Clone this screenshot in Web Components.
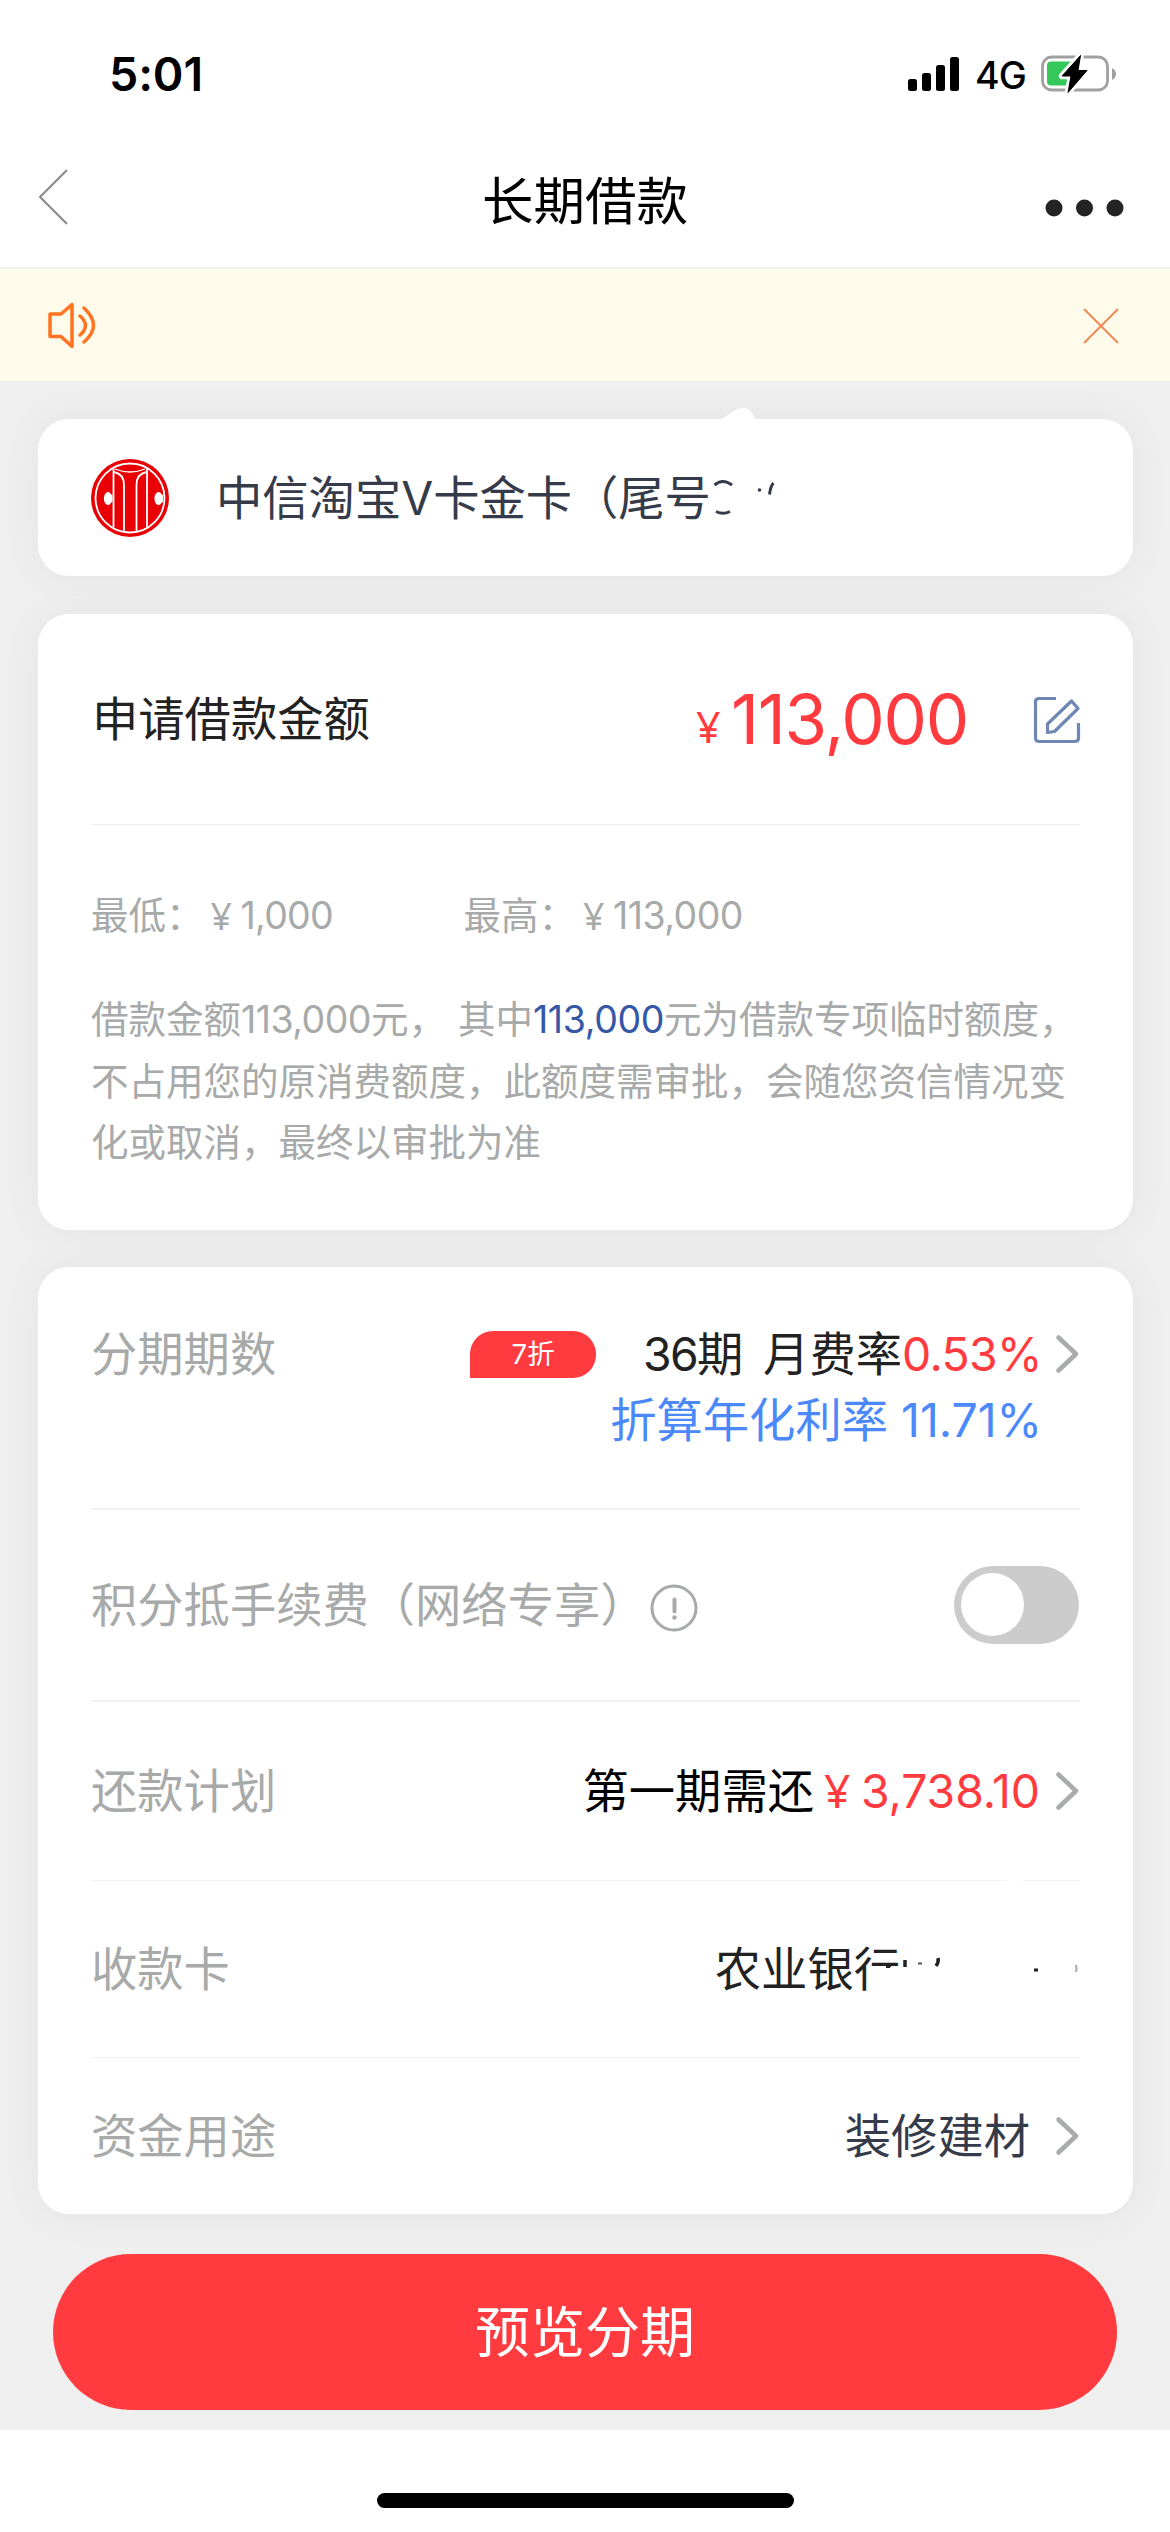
<!DOCTYPE html>
<html lang="zh-CN">
<head>
<meta charset="utf-8">
<title>长期借款</title>
<style>
html,body{margin:0;padding:0;background:#fff}
body{width:1170px;height:2532px;overflow:hidden;font-family:Inter,"Noto Sans CJK SC",sans-serif;font-size:46.3px;line-height:66px;color:#222;-webkit-font-smoothing:antialiased}
</style>
</head>
<body>
<loan-page></loan-page>
<script>
const define=(name,html,init)=>{
  const t=document.createElement('template');t.innerHTML=html;
  customElements.define(name,class extends HTMLElement{
    constructor(){super();this.attachShadow({mode:'open'}).append(t.content.cloneNode(true));}
    connectedCallback(){if(init)init(this);}
  });
};

/* text run whose tracking is adjusted so that it takes the given width */
define('fit-text',`<style>:host{display:inline-block;white-space:pre;flex:none}span{display:inline-block}</style><span><slot></slot></span>`,el=>{
  const s=el.shadowRoot.querySelector('span'),w=+el.getAttribute('w'),n=[...el.textContent].length;
  const natural=s.getBoundingClientRect().width;
  s.style.letterSpacing=((w-natural)/n)+'px';
  el.style.width=w+'px';
});

/* narrow currency sign in a box of fixed width */
define('yuan-sign',`<style>:host{display:block;flex:none;font-family:"Noto Sans","Noto Sans CJK SC",sans-serif}</style>¥`);

define('status-bar',`<style>
:host{display:flex;box-sizing:border-box;height:148px;padding:0 53px 0 109px;align-items:center;justify-content:space-between;color:#000}
.time{font-weight:600;font-size:46.5px}
.right{display:flex;align-items:center}
.net{font-weight:500;font-size:37.5px;margin:4px 0 0 15px}
svg{display:block}
.bat{margin-left:15px}
</style>
<fit-text class="time" w="94">5:01</fit-text>
<div class="right">
<svg width="52" height="34" viewBox="0 0 52 34"><rect x="0" y="22" width="9" height="12" rx="2.5"/><rect x="14" y="16" width="9" height="18" rx="2.5"/><rect x="28" y="8" width="9" height="26" rx="2.5"/><rect x="42" y="0" width="9" height="34" rx="2.5"/></svg>
<fit-text class="net" w="51">4G</fit-text>
<svg class="bat" width="76" height="38" viewBox="0 0 76 38"><rect x="1.5" y="2" width="65" height="33" rx="9" fill="none" stroke="#a0a0a0" stroke-width="2.8"/><path d="M71 13q4 2 4 6t-4 6z" fill="#a0a0a0"/><rect x="6" y="6.500" width="31" height="24" rx="4" fill="#34c759"/><path d="M39.500 .5 21 21h9L27 37.500 46 15.500h-9z" fill="#000" stroke="#fff" stroke-width="6.500" stroke-linejoin="round"/><path d="M39.500 .5 21 21h9L27 37.500 46 15.500h-9z" fill="#000" stroke="#000" stroke-width="1" stroke-linejoin="round"/></svg>
</div>`);

define('nav-bar',`<style>
:host{display:grid;box-sizing:border-box;height:121px;grid-template-columns:126px 1fr 126px;align-items:center;border-bottom:2px solid #f0f0f0;color:#000;font-size:51.5px}
.t{text-align:center;margin-top:-14px}
svg{display:block}
.back{margin:-21px 0 0 37px}
.more{margin:1px 45px 0 auto}
</style>
<svg class="back" width="34" height="60" viewBox="0 0 34 60"><path d="M30 3 3 30 30 57" fill="none" stroke="#888" stroke-width="2"/></svg>
<div class="t"><slot></slot></div>
<svg class="more" width="80" height="18" viewBox="0 0 80 18" fill="#242424"><circle cx="9" cy="9" r="8.500"/><circle cx="39.500" cy="9" r="8.500"/><circle cx="70" cy="9" r="8.500"/></svg>`);

define('notice-bar',`<style>
:host{display:flex;box-sizing:border-box;height:112px;background:#fefbeb;align-items:center;justify-content:space-between;padding:0 50px 0 46px}
svg{display:block}
</style>
<svg width="52" height="52" viewBox="0 0 52 52" fill="none" stroke="#ff7321" stroke-width="3.500" stroke-linejoin="round" stroke-linecap="round"><path d="M4 15h11L26 5.500v42L15 37.500H4z"/><path d="M34 17q11 9.500 0 19M38 9q19 17.500 0 34"/></svg>
<svg width="38" height="38" viewBox="0 0 38 38" fill="none" stroke="#f18a57" stroke-width="2"><path d="M2 3l34 34M36 3 2 37"/></svg>`);

define('panel-card',`<style>
:host{display:flex;flex-direction:column;box-sizing:border-box;margin:0 37px 0 38px;padding:0 53px;background:#fff;border-radius:31px;box-shadow:0 0 42px rgba(0,0,0,.055);position:relative}
</style><slot></slot>`);

define('bank-logo',`<style>:host{display:block;width:78px;height:78px}svg{display:block}</style>
<svg width="78" height="78" viewBox="0 0 78 78"><circle cx="39" cy="39" r="39" fill="#e80004"/><circle cx="39" cy="39" r="34.500" fill="none" stroke="#fff" stroke-width="1.800"/>
<g fill="none" stroke="#fff" stroke-width="1.800"><path d="M22.500 10v58M56 10v58"/><path d="M23 13q10 2 10 13v46M55.500 13q-10 2-10 13v46"/><path d="M24 10q15 6 30 0" stroke-width="1.300"/></g>
<path d="M21.500 36c-2 0-2-3-4-3-6 0-6 13 0 13 2 0 2-3 4-3zM72 36c-2 0-2-3-4-3-6 0-6 13 0 13 2 0 2-3 4-3z" fill="#fff"/></svg>`);

define('account-row',`<style>
:host{display:flex;height:157px;align-items:center;color:#363b4a;position:relative}
bank-logo{margin-right:47px}
.frag{position:absolute;left:592px;top:-12px}
</style>
<bank-logo></bank-logo><slot></slot>
<svg class="frag" width="100" height="120" viewBox="683 407 100 120"><path d="M721 419.500C730 415 734 408 744 408q8 1 11 11.500z" fill="#fff"/><g fill="none" stroke="#363b4a" stroke-width="3"><path d="M714.500 485q8-7 17.500 0M716 511.500q7 3.500 14 0"/><path d="M773.500 483q-3 3-4 11.500"/></g><circle cx="759.500" cy="490" r="1.800" fill="#363b4a"/></svg>`);

define('amount-row',`<style>
:host{display:flex;height:210px;align-items:center;border-bottom:1px solid #eee}
.label{flex:1;padding-left:1px}
.cur{width:35px;font-size:43px;color:#ff3b3f;margin-top:15px}
.num{font-size:69px;color:#ff3b3f;margin:0 64px 0 0}
svg{display:block;margin:2px -1px 0 1px}
</style>
<div class="label"><slot></slot></div>
<yuan-sign class="cur"></yuan-sign><fit-text class="num" w="237">113,000</fit-text>
<svg width="48" height="48" viewBox="0 0 48 48" fill="none" stroke="#6f87b3" stroke-width="3.200" stroke-linejoin="round"><path d="M23 2.500H6q-3.500 0-3.500 3.500v36q0 3.500 3.500 3.500h36q3.500 0 3.500-3.500V27"/><path d="M14.500 36.500v-8.500L38.500 5l6.500 7.500L21.500 35.500z"/></svg>`);

define('amount-limits',`<style>
:host{display:flex;margin-top:68px;height:46px;line-height:46px;font-size:37.5px;color:#a7aaa9;white-space:pre}
.hi{margin-left:130.500px}
div{display:flex}
yuan-sign{margin-left:7px;width:30px}
</style>
<div><span>最低：</span><yuan-sign></yuan-sign><fit-text w="92.5">1,000</fit-text></div>
<div class="hi"><span>最高：</span><yuan-sign></yuan-sign><fit-text w="130">113,000</fit-text></div>`);

define('amount-note',`<style>
:host{display:block;margin-top:50px;height:241px;font-size:37.5px;line-height:61.500px;color:#a7aaa9;white-space:nowrap}
.l{display:flex;height:61.500px}
.sp{width:12px}
</style>
<div class="l"><span>借款金额</span><fit-text w="130">113,000</fit-text><span>元，</span><span class="sp"></span><span>其中</span><fit-text w="131" style="color:#3557a5">113,000</fit-text><span>元为借款专项临时额度，</span></div>
<div class="l">不占用您的原消费额度，此额度需审批，会随您资信情况变</div>
<div class="l">化或取消，最终以审批为准</div>`);

define('form-row',`<style>
:host{display:flex;box-sizing:border-box;align-items:center;height:var(--h);border-bottom:var(--b,0) solid #f2f2f2;position:relative}
.label{flex:1;color:#a7aaa9;display:flex;align-items:center}
.value{display:flex;align-items:center;align-self:stretch}
</style>
<div class="label"><slot name="label"></slot></div><div class="value"><slot></slot></div>`);

define('chevron-icon',`<style>:host{display:block;margin:0 -1px 0 12px}svg{display:block}</style>
<svg width="27" height="42" viewBox="0 0 27 42"><path d="M4.500 4.500 22 21 4.500 37.500" fill="none" stroke="#a9acab" stroke-width="4.600" stroke-linecap="round" stroke-linejoin="round"/></svg>`);

define('discount-tag',`<style>:host{display:block;width:126px;height:47px;line-height:47px;background:#ff3b3f;color:#fff;border-radius:23px 23px 23px 0;font-size:27.5px;text-align:center;margin-right:47px;margin-top:1px;white-space:nowrap}</style><slot></slot>`);

define('rate-block',`<style>
:host{display:flex;flex-direction:column;align-self:flex-start;padding-top:54px}
.l{display:flex;height:66px;align-items:center}
.second{justify-content:flex-end;padding-right:38px}
</style><div class="l"><slot></slot></div><div class="l second"><slot name="sub"></slot></div>`);

define('info-icon',`<style>:host{display:block;margin:6px 0 0 3px}svg{display:block}</style>
<svg width="48" height="48" viewBox="0 0 48 48"><circle cx="24" cy="24" r="22" fill="none" stroke="#a7aaa9" stroke-width="3"/><path d="M24.500 15.500v12" stroke="#a7aaa9" stroke-width="4" stroke-linecap="round"/><circle cx="24.500" cy="33.500" r="2.200" fill="#a7aaa9"/></svg>`);

define('toggle-switch',`<style>:host{display:block;box-sizing:border-box;width:125px;height:78px;border-radius:39px;background:#ccc;padding:7px;margin-right:1px}i{display:block;width:63px;height:63px;border-radius:50%;background:#fff}</style><i></i>`);

/* smudges left where the card number has been wiped out */
define('wiped-number',`<style>:host{display:block;width:180px;height:90px}svg{position:absolute;left:745px;top:-2px}</style>
<svg width="250" height="130" viewBox="836 1879 250 130"><path d="M1007 1879h16v3h-16zM868 1967H902V2000H868z" fill="#fff"/><g fill="none" stroke="#222" stroke-width="3.500"><path d="M905 1960v7M938 1958q1 4-2 8"/></g><path d="M918 1963.500h4" stroke="#555" stroke-width="2"/><path d="M886 1966.500h4M1034 1970h4" stroke="#222" stroke-width="3"/><path d="M1075.500 1965q2 4 0 7" fill="none" stroke="#aaa" stroke-width="2"/></svg>`);

define('submit-button',`<style>:host{display:block;margin:40px 53px 0;height:156px;line-height:156px;border-radius:78px;background:#ff3b3f;color:#fff;font-size:55px;text-align:center}</style><slot></slot>`);

define('home-indicator',`<style>:host{display:flex;height:102px;justify-content:center;background:#fff}i{width:417px;height:15px;border-radius:7.500px;background:#000;margin-top:63px}</style><i></i>`);

define('loan-page',`<style>
:host{display:flex;flex-direction:column;height:2532px;background:#fff}
main{display:flex;flex-direction:column;box-sizing:border-box;height:2049px;padding-top:38px;background:#efefef}
.gap{margin-top:38px}.gap2{margin-top:37px}
.red{color:#ff3b3f}.blue{color:#4b89fb}.black{color:#000}.slate{color:#363b4a}
</style>
<status-bar></status-bar>
<nav-bar>长期借款</nav-bar>
<notice-bar></notice-bar>
<main>
<panel-card><account-row>中信淘宝V卡金卡（尾号</account-row></panel-card>
<panel-card class="gap"><amount-row>申请借款金额</amount-row><amount-limits></amount-limits><amount-note></amount-note></panel-card>
<panel-card class="gap2">
<form-row style="--h:243px;--b:2px"><span slot="label" style="margin-top:-67px">分期期数</span>
<rate-block><discount-tag>7折</discount-tag><fit-text w="54">36</fit-text><fit-text w="66">期 </fit-text><span>月费率</span><fit-text class="red" w="140">0.53%</fit-text><chevron-icon></chevron-icon><span slot="sub" class="blue">折算年化利率</span><fit-text slot="sub" class="blue" w="154"> 11.71%</fit-text></rate-block></form-row>
<form-row style="--h:192px;--b:2px"><span slot="label">积分抵手续费（网络专享）</span><info-icon slot="label"></info-icon><toggle-switch></toggle-switch></form-row>
<form-row style="--h:179px;--b:1px"><span slot="label">还款计划</span><span class="black">第一期需还</span><yuan-sign class="red" style="width:37px;margin-left:10px"></yuan-sign><fit-text class="red" w="179" style="margin-right:2px">3,738.10</fit-text><chevron-icon></chevron-icon></form-row>
<form-row style="--h:177px;--b:1px"><span slot="label">收款卡</span><span>农业银行</span><wiped-number></wiped-number></form-row>
<form-row style="--h:156px"><span slot="label">资金用途</span><span class="slate" style="margin-right:12px">装修建材</span><chevron-icon></chevron-icon></form-row>
</panel-card>
<submit-button>预览分期</submit-button>
</main>
<home-indicator></home-indicator>`);
</script>
</body>
</html>
